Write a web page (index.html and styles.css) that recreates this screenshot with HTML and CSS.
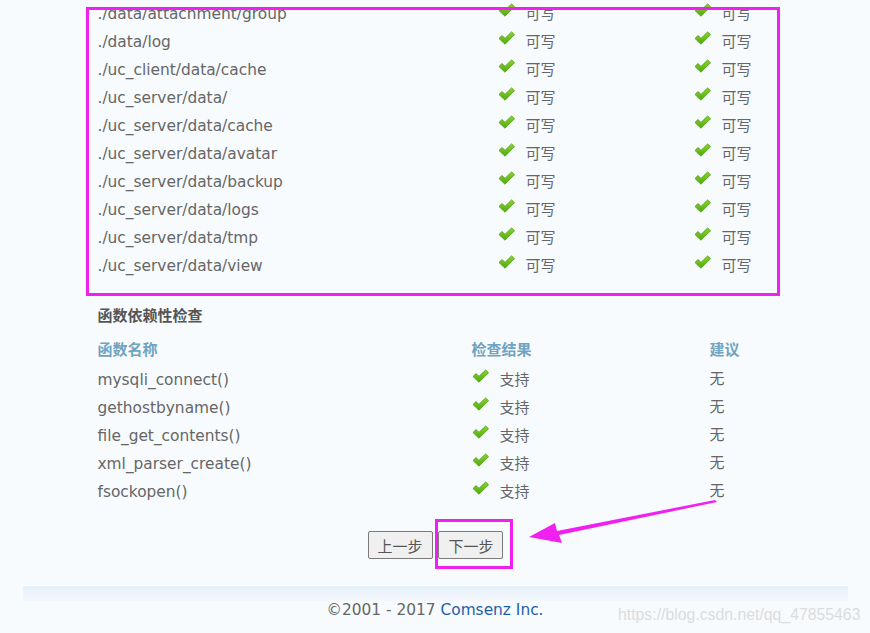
FILE: index.html
```html
<!DOCTYPE html>
<html>
<head>
  <meta charset="utf-8">
  <title>Discuz! 安装向导</title>
  <link rel="stylesheet" href="styles.css">
</head>
<body>
  <svg width="0" height="0" class="defs">
    <defs>
      <linearGradient id="g" x1="0" y1="0" x2="0" y2="1">
        <stop offset="0" stop-color="#8ad62a"/>
        <stop offset="1" stop-color="#52a812"/>
      </linearGradient>
      <symbol id="ok" viewBox="0 0 17 14">
        <path d="M1 7.5 L4 4.6 L7 7.4 L13.6 1 L16.5 3.7 L7 13.2 Z" fill="url(#g)" stroke="#5aa61a" stroke-width="1" stroke-linejoin="round"/>
      </symbol>
    </defs>
  </svg>

  <div class="wrap">
    <div class="main">
      <table class="tb dirs">
        <tr><td class="c1">./data/attachment/group</td><td class="c2"><svg class="ico"><use href="#ok"/></svg><span class="zh">可写</span></td><td><svg class="ico"><use href="#ok"/></svg><span class="zh">可写</span></td></tr>
        <tr><td class="c1">./data/log</td><td class="c2"><svg class="ico"><use href="#ok"/></svg><span class="zh">可写</span></td><td><svg class="ico"><use href="#ok"/></svg><span class="zh">可写</span></td></tr>
        <tr><td class="c1">./uc_client/data/cache</td><td class="c2"><svg class="ico"><use href="#ok"/></svg><span class="zh">可写</span></td><td><svg class="ico"><use href="#ok"/></svg><span class="zh">可写</span></td></tr>
        <tr><td class="c1">./uc_server/data/</td><td class="c2"><svg class="ico"><use href="#ok"/></svg><span class="zh">可写</span></td><td><svg class="ico"><use href="#ok"/></svg><span class="zh">可写</span></td></tr>
        <tr><td class="c1">./uc_server/data/cache</td><td class="c2"><svg class="ico"><use href="#ok"/></svg><span class="zh">可写</span></td><td><svg class="ico"><use href="#ok"/></svg><span class="zh">可写</span></td></tr>
        <tr><td class="c1">./uc_server/data/avatar</td><td class="c2"><svg class="ico"><use href="#ok"/></svg><span class="zh">可写</span></td><td><svg class="ico"><use href="#ok"/></svg><span class="zh">可写</span></td></tr>
        <tr><td class="c1">./uc_server/data/backup</td><td class="c2"><svg class="ico"><use href="#ok"/></svg><span class="zh">可写</span></td><td><svg class="ico"><use href="#ok"/></svg><span class="zh">可写</span></td></tr>
        <tr><td class="c1">./uc_server/data/logs</td><td class="c2"><svg class="ico"><use href="#ok"/></svg><span class="zh">可写</span></td><td><svg class="ico"><use href="#ok"/></svg><span class="zh">可写</span></td></tr>
        <tr><td class="c1">./uc_server/data/tmp</td><td class="c2"><svg class="ico"><use href="#ok"/></svg><span class="zh">可写</span></td><td><svg class="ico"><use href="#ok"/></svg><span class="zh">可写</span></td></tr>
        <tr><td class="c1">./uc_server/data/view</td><td class="c2"><svg class="ico"><use href="#ok"/></svg><span class="zh">可写</span></td><td><svg class="ico"><use href="#ok"/></svg><span class="zh">可写</span></td></tr>
      </table>

      <h2 class="title">函数依赖性检查</h2>
      <table class="tb funcs">
        <tr class="th"><td class="c1">函数名称</td><td class="c2">检查结果</td><td>建议</td></tr>
        <tr><td class="c1">mysqli_connect()</td><td class="c2"><svg class="ico"><use href="#ok"/></svg><span class="zh">支持</span></td><td><span class="zh">无</span></td></tr>
        <tr><td class="c1">gethostbyname()</td><td class="c2"><svg class="ico"><use href="#ok"/></svg><span class="zh">支持</span></td><td><span class="zh">无</span></td></tr>
        <tr><td class="c1">file_get_contents()</td><td class="c2"><svg class="ico"><use href="#ok"/></svg><span class="zh">支持</span></td><td><span class="zh">无</span></td></tr>
        <tr><td class="c1">xml_parser_create()</td><td class="c2"><svg class="ico"><use href="#ok"/></svg><span class="zh">支持</span></td><td><span class="zh">无</span></td></tr>
        <tr><td class="c1">fsockopen()</td><td class="c2"><svg class="ico"><use href="#ok"/></svg><span class="zh">支持</span></td><td><span class="zh">无</span></td></tr>
      </table>

      <div class="btnbox">
        <button type="button">上一步</button>
        <button type="button">下一步</button>
      </div>
    </div>

    <div class="footbar"></div>
    <div class="copy">&copy;2001 - 2017 <a href="#">Comsenz Inc.</a></div>
  </div>

  <!-- annotations drawn on the screenshot -->
  <div class="mark mark-dirs"></div>
  <div class="mark mark-next"></div>
  <svg class="arrow" width="200" height="50" viewBox="0 0 200 50">
    <path d="M186 1 L188 3 L30 36 L33 44 L0 38 L26 24 L28 32 Z" fill="#f020f0"/>
  </svg>
  <div class="watermark">https://blog.csdn.net/qq_47855463</div>
</body>
</html>
```

FILE: styles.css
```css
body {
    margin: 0;
    background: #f7fbfe;
    font-family: "DejaVu Sans", Verdana, "Noto Sans CJK SC", sans-serif;
    font-size: 15.4px;
    color: #666;
    position: relative;
    height: 633px;
    overflow: hidden;
}
.defs {
    position: absolute;
}
.wrap {
    width: 825px;
    margin: 0 auto;
}
.main {
    padding-left: 75px;
}
.tb {
    border-collapse: collapse;
}
.tb td {
    height: 28px;
    padding: 0;
    line-height: 20px;
    vertical-align: middle;
    white-space: nowrap;
}
.dirs .c1 {
    width: 400px;
}
.dirs .c2 {
    width: 196px;
}
.funcs .c1 {
    width: 374px;
}
.funcs .c2 {
    width: 238px;
}
.zh {
    font-family: "Noto Sans CJK SC", sans-serif;
    font-size: 15px;
    line-height: 20px;
    position: relative;
    top: -2px;
}
.ico {
    width: 17px;
    height: 14px;
    margin-right: 11px;
    vertical-align: 4px;
}
.title {
    margin: 18px 0 0;
    height: 34px;
    line-height: 34px;
    font-size: 15px;
    font-weight: bold;
    color: #555;
    font-family: "Noto Sans CJK SC", sans-serif;
}
.funcs .th td {
    height: 34px;
    color: #6fa3c0;
    font-weight: bold;
    font-size: 15px;
    font-family: "Noto Sans CJK SC", sans-serif;
}
.btnbox {
    padding: 25px 0 0 270px;
    height: 50px;
}
.btnbox button {
    width: 65px;
    height: 28px;
    margin-right: 1px;
    padding: 0;
    background: #f0f0f0;
    border: 1px solid #7a7a7a;
    border-radius: 2px;
    font-size: 15px;
    color: #555;
    font-family: "Noto Sans CJK SC", sans-serif;
}
.footbar {
    margin-top: 4px;
    height: 15px;
    border-top: 1px solid #fff;
    background: linear-gradient(#e6f0fa, #f4f8fc);
}
.copy {
    text-align: center;
    padding-top: 0;
    line-height: 18px;
    font-size: 15.4px;
    color: #666;
}
.copy a {
    color: #1f5fa8;
    text-decoration: none;
}
.mark {
    position: absolute;
    border: 3px solid #f020f0;
}
.mark-dirs {
    left: 86px;
    top: 7px;
    width: 688px;
    height: 283px;
}
.mark-next {
    left: 435px;
    top: 519px;
    width: 72px;
    height: 44px;
}
.arrow {
    position: absolute;
    left: 529px;
    top: 499px;
}
.watermark {
    position: absolute;
    left: 618px;
    top: 606px;
    font-family: "Liberation Sans", Arial, sans-serif;
    font-size: 15.8px;
    color: #dcdcdc;
}
```
